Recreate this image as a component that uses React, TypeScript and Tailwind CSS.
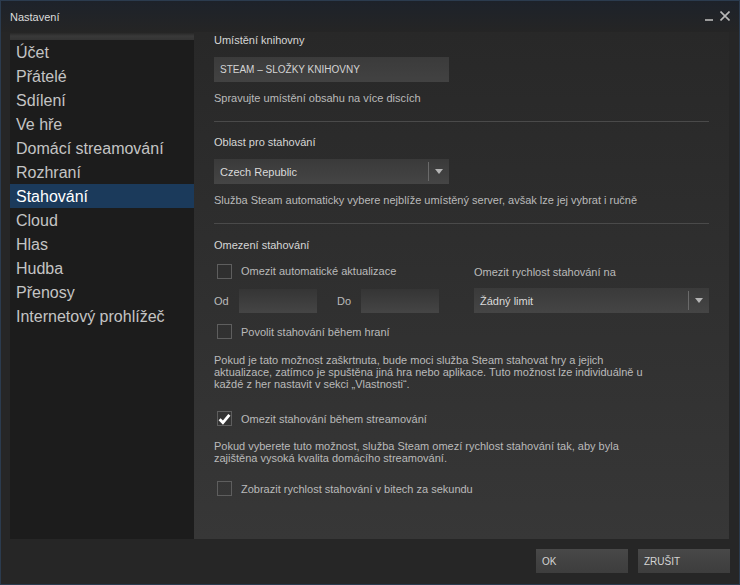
import React from "react";

function Box({ checked }: { checked?: boolean }) {
  return (
    <div className="w-[15px] h-[15px] border border-[#5e5e5e] flex items-center justify-center shrink-0">
      {checked && (
        <svg width="13" height="12" viewBox="0 0 13 12">
          <path d="M1.6 6.2 L4.9 9.6 L11.4 1.8" stroke="#ffffff" strokeWidth="2.8" fill="none" />
        </svg>
      )}
    </div>
  );
}

function Dropdown({ label }: { label: string }) {
  return (
    <div className="h-[25px] flex items-center bg-gradient-to-b from-[#3a3a3a] to-[#454545]">
      <span className="flex-1 pl-[6px] text-[11px] text-[#dadada] leading-[14px]">{label}</span>
      <div className="w-px h-[19px] bg-[#6a6a6a]" />
      <div className="w-[20px] flex justify-center">
        <svg width="8" height="5" viewBox="0 0 8 5">
          <path d="M0 0 H8 L4 5 Z" fill="#b4b4b4" />
        </svg>
      </div>
    </div>
  );
}

const items = [
  "Účet",
  "Přátelé",
  "Sdílení",
  "Ve hře",
  "Domácí streamování",
  "Rozhraní",
  "Stahování",
  "Cloud",
  "Hlas",
  "Hudba",
  "Přenosy",
  "Internetový prohlížeč",
];

export default function App() {
  return (
    <div className="w-[740px] h-[585px] overflow-hidden font-['Liberation_Sans',Arial,sans-serif] border border-[#2b3b4e] bg-[#262626] flex flex-col">
      {/* title bar */}
      <div className="h-[31px] shrink-0 flex items-center justify-between pl-[9px] pr-[9px] bg-gradient-to-b from-[#1d222a] to-[#252525]">
        <span className="text-[11px] text-[#dcdcdc] leading-[14px] pt-[1px]">Nastavení</span>
        <div className="flex items-end gap-[7px] pb-[3px]">
          <svg width="8" height="12" viewBox="0 0 8 12">
            <rect x="0" y="10" width="8" height="2" fill="#9a9a9a" />
          </svg>
          <svg width="10" height="10" viewBox="0 0 10 10">
            <path d="M0.5 0.5 L9.5 9.5 M9.5 0.5 L0.5 9.5" stroke="#b8b8b8" strokeWidth="1.6" />
          </svg>
        </div>
      </div>

      {/* body */}
      <div className="h-[507px] shrink-0 flex pl-[9px] pr-[10px]">
        {/* sidebar */}
        <div className="w-[184px] bg-[#1c1c1c] flex flex-col">
          <div className="h-[8px] bg-gradient-to-b from-[#232323] via-[#393939] to-[#333333]" />
          {items.map((it) => (
            <div
              key={it}
              className={
                it === "Stahování"
                  ? "h-[24px] flex items-center pl-[6px] pt-[2px] text-[16px] text-white bg-[#1b3a5b]"
                  : "h-[24px] flex items-center pl-[6px] pt-[2px] text-[16px] text-[#c4c4c4]"
              }
            >
              {it}
            </div>
          ))}
        </div>

        {/* main */}
        <div className="flex-1 bg-gradient-to-b from-[#282828] to-[#373737] pl-[20px] pr-[20px] pt-[1px] flex flex-col text-[11px] leading-[14px] text-[#bababa]">
          <div className="h-[14px] text-[#d6d6d6]">Umístění knihovny</div>
          <div className="mt-[10px] w-[235px] h-[25px] flex items-center pl-[6px] text-[10px] text-[#d4d4d4] bg-gradient-to-b from-[#3b3b3b] to-[#424242]">
            STEAM – SLOŽKY KNIHOVNY
          </div>
          <div className="mt-[9px] h-[14px]">Spravujte umístění obsahu na více discích</div>
          <div className="mt-[16px] h-px bg-[#4a4a4a]" />

          <div className="mt-[13px] h-[14px] text-[#d6d6d6]">Oblast pro stahování</div>
          <div className="mt-[10px] w-[235px]">
            <Dropdown label="Czech Republic" />
          </div>
          <div className="mt-[9px] h-[14px]">
            Služba Steam automaticky vybere nejblíže umístěný server, avšak lze jej vybrat i ručně
          </div>
          <div className="mt-[16px] h-px bg-[#4a4a4a]" />

          <div className="mt-[14px] h-[14px] text-[#d6d6d6]">Omezení stahování</div>

          <div className="mt-[11px] flex">
            <div className="w-[260px] flex flex-col">
              <div className="h-[16px] flex items-center pl-[3px] gap-[9px]">
                <Box />
                <span>Omezit automatické aktualizace</span>
              </div>
              <div className="mt-[10px] h-[24px] flex items-center">
                <span className="w-[25px]">Od</span>
                <div className="w-[78px] h-[24px] bg-gradient-to-b from-[#353535] to-[#454545]" />
                <span className="w-[24px] ml-[20px]">Do</span>
                <div className="w-[78px] h-[24px] bg-gradient-to-b from-[#353535] to-[#454545]" />
              </div>
            </div>
            <div className="w-[235px] flex flex-col">
              <div className="h-[16px] flex items-center pt-[1px]">Omezit rychlost stahování na</div>
              <div className="mt-[9px]">
                <Dropdown label="Žádný limit" />
              </div>
            </div>
          </div>

          <div className="mt-[11px] h-[15px] flex items-center pl-[3px] gap-[9px]">
            <Box />
            <span>Povolit stahování během hraní</span>
          </div>
          <p className="mt-[15px] w-[440px] leading-[12px]">
            Pokud je tato možnost zaškrtnuta, bude moci služba Steam stahovat hry a jejich aktualizace, zatímco je spuštěna jiná hra nebo aplikace. Tuto možnost lze individuálně u každé z her nastavit v sekci „Vlastnosti“.
          </p>

          <div className="mt-[21px] h-[15px] flex items-center pl-[3px] gap-[9px]">
            <Box checked />
            <span>Omezit stahování během streamování</span>
          </div>
          <p className="mt-[14px] w-[440px] leading-[12px]">
            Pokud vyberete tuto možnost, služba Steam omezí rychlost stahování tak, aby byla zajištěna vysoká kvalita domácího streamování.
          </p>

          <div className="mt-[17px] h-[15px] flex items-center pl-[3px] gap-[9px]">
            <Box />
            <span>Zobrazit rychlost stahování v bitech za sekundu</span>
          </div>
        </div>
      </div>

      {/* bottom bar */}
      <div className="flex-1 flex justify-end items-start pt-[10px] pr-[9px] gap-[10px]">
        <div className="w-[92px] h-[24px] flex items-center pl-[6px] text-[10px] text-[#d4d4d4] bg-gradient-to-b from-[#484848] to-[#3d3d3d]">
          OK
        </div>
        <div className="w-[92px] h-[24px] flex items-center pl-[6px] text-[10px] text-[#d4d4d4] bg-gradient-to-b from-[#484848] to-[#3d3d3d]">
          ZRUŠIT
        </div>
      </div>
    </div>
  );
}
